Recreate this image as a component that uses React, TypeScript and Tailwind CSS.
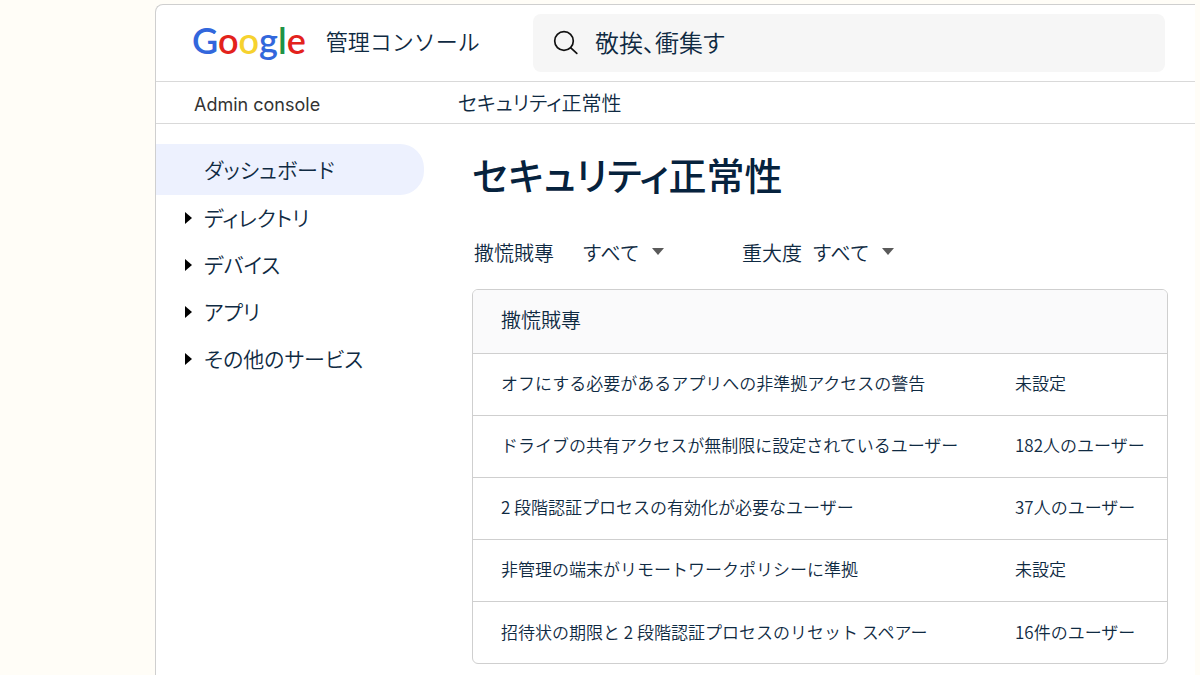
const wordmark = [
  { letter: "G", color: "text-[#3267dc]" },
  { letter: "o", color: "text-[#e3221c]" },
  { letter: "o", color: "text-[#f6d22f]" },
  { letter: "g", color: "text-[#3267dc]" },
  { letter: "l", color: "text-[#1f9345]" },
  { letter: "e", color: "text-[#e3221c]" },
];

const sections = ["ディレクトリ", "デバイス", "アプリ", "その他のサービス"];

const rows = [
  { setting: "オフにする必要があるアプリへの非準拠アクセスの警告", status: "未設定" },
  { setting: "ドライブの共有アクセスが無制限に設定されているユーザー", status: "182人のユーザー" },
  { setting: "2 段階認証プロセスの有効化が必要なユーザー", status: "37人のユーザー" },
  { setting: "非管理の端末がリモートワークポリシーに準拠", status: "未設定" },
  { setting: "招待状の期限と 2 段階認証プロセスのリセット スペアー", status: "16件のユーザー" },
];

function Wordmark() {
  return (
    <a
      href="#"
      aria-label="Google"
      className="font-['Lato',sans-serif] text-[36px] leading-none font-semibold"
    >
      {wordmark.map(({ letter, color }, i) => (
        <span key={i} className={color}>
          {letter}
        </span>
      ))}
    </a>
  );
}

function SearchIcon() {
  return (
    <svg
      viewBox="0 0 26 26"
      className="size-[26px] shrink-0"
      fill="none"
      stroke="#111111"
      strokeWidth="1.7"
      strokeLinecap="round"
      aria-hidden
    >
      <circle cx="11" cy="12" r="9.3" />
      <path d="M17.8 18.8l6 5.6" />
    </svg>
  );
}

function Filter({ id, label, gap }: { id: string; label: string; gap: string }) {
  return (
    <div className={`flex items-center ${gap}`}>
      <label htmlFor={id}>{label}</label>
      <div className="relative">
        <select
          id={id}
          className="w-[82px] cursor-pointer appearance-none bg-transparent outline-none"
        >
          <option>すべて</option>
        </select>
        <svg
          viewBox="0 0 12 7"
          className="pointer-events-none absolute top-[10px] right-0 h-[7px] w-3"
          aria-hidden
        >
          <path d="M0 0h12L6 7z" fill="#5a5a5a" />
        </svg>
      </div>
    </div>
  );
}

function Sidebar() {
  return (
    <nav className="w-[268px] shrink-0 pt-5 text-[21px] [font-feature-settings:'palt']">
      <a
        href="#"
        aria-current="page"
        className="flex h-[51px] items-center rounded-r-3xl bg-[#edf1fe] pl-12"
      >
        ダッシュボード
      </a>
      <ul>
        {sections.map((section) => (
          <li key={section}>
            <button type="button" className="flex h-[47px] w-full items-center pb-[2px] pl-[29px]">
              <svg viewBox="0 0 7 12" className="mr-3 h-3 w-[7px]" aria-hidden>
                <path d="M0 0l7 6-7 6z" fill="#000" />
              </svg>
              {section}
            </button>
          </li>
        ))}
      </ul>
    </nav>
  );
}

export default function App() {
  return (
    <div className="flex min-h-screen flex-col bg-[#fffdf7] pt-1 pr-[5px] pl-[155px] font-['Noto_Sans_CJK_JP',sans-serif] font-[350] text-[#0f2a42]">
      <div className="flex flex-1 flex-col rounded-tl-lg border-t border-l border-[#cfcfcf] bg-white">
        <header className="flex h-[77px] items-center border-b border-[#d9d9d9] pr-[30px] pl-9">
          <div className="flex w-[341px] shrink-0 items-center gap-5 pb-[6px]">
            <Wordmark />
            <span className="text-[22px] leading-none whitespace-nowrap">管理コンソール</span>
          </div>
          <label className="flex h-[58px] flex-1 items-center gap-4 rounded-lg bg-[#f6f6f6] pb-[2px] pl-5">
            <SearchIcon />
            <input
              type="text"
              aria-label="検索"
              placeholder="敬挨、衝集す"
              className="min-w-0 flex-1 bg-transparent text-[24px] outline-none [font-feature-settings:'palt'] placeholder:text-[#0f2a42]"
            />
          </label>
        </header>

        <div className="flex h-[42px] items-center border-b border-[#d9d9d9] pl-[38px]">
          <span className="w-[264px] shrink-0 pt-1 font-['Inter',sans-serif] text-[18px] leading-none font-normal text-[#333333]">
            Admin console
          </span>
          <span className="text-[20px] leading-none [font-feature-settings:'palt']">
            セキュリティ正常性
          </span>
        </div>

        <div className="flex flex-1">
          <Sidebar />
          <main className="min-w-0 flex-1 pt-[22px] pr-[27px] pb-[10px] pl-12">
            <h1 className="text-[38px] leading-[56px] font-medium text-[#06223d] [font-feature-settings:'palt']">
              セキュリティ正常性
            </h1>

            <div className="mt-[33px] flex h-9 items-center gap-[78px] pl-[2px] text-[20px]">
              <Filter id="category" label="撒慌賊專" gap="gap-7" />
              <Filter id="severity" label="重大度" gap="gap-[10px]" />
            </div>

            <div className="mt-[18px] overflow-hidden rounded-md border border-[#cfcfcf]">
              <table className="w-full text-left text-[17px]">
                <thead>
                  <tr className="h-[63px] bg-[#fafafb]">
                    <th colSpan={2} className="pb-[2px] pl-7 text-[20px] font-[350]">
                      撒慌賊專
                    </th>
                  </tr>
                </thead>
                <tbody>
                  {rows.map(({ setting, status }) => (
                    <tr key={setting} className="h-[62px] border-t border-[#cfcfcf]">
                      <td className="pb-[2px] pl-7">{setting}</td>
                      <td className="w-[152px] pb-[2px] whitespace-nowrap">{status}</td>
                    </tr>
                  ))}
                </tbody>
              </table>
            </div>
          </main>
        </div>
      </div>
    </div>
  );
}
